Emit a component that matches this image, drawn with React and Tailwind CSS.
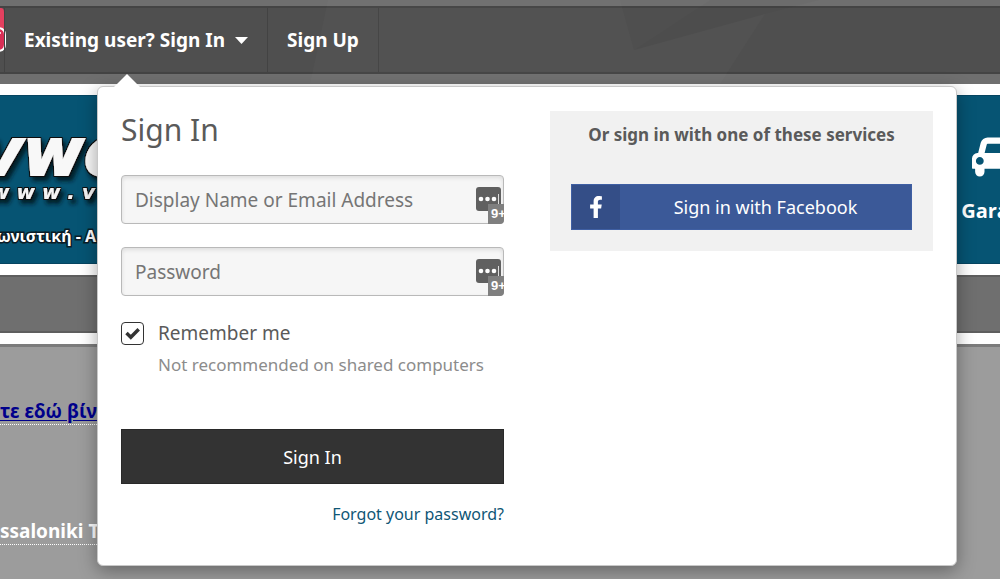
import { useState } from "react";
import { FaFacebookF } from "react-icons/fa";

function Facets() {

  return (

    <svg
      className="pointer-events-none absolute inset-0 h-full w-full"
      viewBox="0 0 1000 84"
      preserveAspectRatio="none"
      aria-hidden="true"
    >

      <polygon points="328,0 310,84 720,84 765,14 634,50 620,0" fill="#ffffff" opacity="0.02" />
      <polygon points="634,50 710,0 820,0 765,14" fill="#000000" opacity="0.02" />

    </svg>
  );
}

function InstagramIcon() {

  return (

    <svg className="h-16 w-1.5 shrink-0" viewBox="0 0 6 64" aria-hidden="true">

      <path d="M0 0H1Q4 0 4 4V42H0Z" fill="#e4405f" />
      <path d="M-14 20H-2Q5 20 5 27V36Q5 43-2 43H-14Z" fill="#d92e55" stroke="#ffffff" strokeWidth="2" />
      <circle cx="0" cy="25" r="1" fill="#ffffff" />

    </svg>
  );
}

function Logo() {

  return (

    <svg className="h-[167px] w-[110px] shrink-0" viewBox="0 0 110 167" aria-label="Club logo">

      <defs>
        <filter id="shade" x="-20%" y="-20%" width="140%" height="150%">
          <feMorphology in="SourceAlpha" operator="dilate" radius="1" result="edge" />
          <feFlood floodColor="#111111" />
          <feComposite in2="edge" operator="in" result="outline" />
          <feMerge result="lettering">
            <feMergeNode in="outline" />
            <feMergeNode in="SourceGraphic" />
          </feMerge>
          <feDropShadow in="lettering" dx="3" dy="4" stdDeviation="2" floodColor="#00141e" floodOpacity="0.9" />
        </filter>
      </defs>

      <text
        x="-20"
        y="79"
        fill="#f8f8f8"
        stroke="#f8f8f8"
        strokeWidth="2"
        fontFamily="DejaVu Sans, sans-serif"
        fontWeight="700"
        fontStyle="italic"
        fontSize="66"
        filter="url(#shade)"
      >
        vwc
      </text>

      <text
        x="-9"
        y="103"
        fill="#f4f4f4"
        fontFamily="DejaVu Sans, sans-serif"
        fontWeight="700"
        fontStyle="italic"
        fontSize="20"
        filter="url(#shade)"
      >
        w w w . v
      </text>

      <text
        x="-3"
        y="146"
        fill="#ffffff"
        stroke="#0a1c26"
        strokeWidth="3"
        paintOrder="stroke"
        fontFamily="Noto Sans, sans-serif"
        fontWeight="700"
        fontSize="16"
      >
        ωνιστική - Α
      </text>

    </svg>
  );
}

function CarIcon() {

  return (

    <svg className="h-10 w-[50px]" viewBox="0 0 2048 1600" fill="currentColor" aria-hidden="true">

      <path d="M480 960q0-66-47-113t-113-47-113 47-47 113 47 113 113 47 113-47 47-113zm36-320h1016l-89-357q-2-8-14-17.500t-21-9.500h-768q-9 0-21 9.500t-14 17.500zm1372 320q0-66-47-113t-113-47-113 47-47 113 47 113 113 47 113-47 47-113zm160-96v384q0 14-9 23t-23 9h-96v128q0 80-56 136t-136 56-136-56-56-136v-128h-1024v128q0 80-56 136t-136 56-136-56-56-136v-128h-96q-14 0-23-9t-9-23v-384q0-93 65.500-158.500t158.500-65.500h28l105-419q23-94 104-157.500t179-63.500h768q98 0 179 63.500t104 157.500l105 419h28q93 0 158.500 65.500t65.500 158.500z" />

    </svg>
  );
}

function Field({ type, label }) {

  return (

    <div className="relative">

      <input
        type={type}
        placeholder={label}
        aria-label={label}
        className="block h-[49px] w-full rounded border border-[#b9b9b9] bg-[#f6f6f6] pl-[13px] pr-9 text-[19px] text-[#5a5a5a] shadow-[inset_0_2px_4px_rgba(0,0,0,0.1)] placeholder:text-[#757575]"
      />

      {/* PASSWORD MANAGER BADGE */}

      <div className="absolute right-0 bottom-0 h-[37px] w-7 overflow-hidden rounded-br">

        <svg className="h-6 w-[25px]" viewBox="0 0 25 24" aria-hidden="true">

          <rect width="25" height="24" rx="3" fill="#606060" />
          <circle cx="5" cy="12" r="2.300" fill="#ffffff" />
          <circle cx="11.500" cy="12" r="2.300" fill="#ffffff" />
          <circle cx="18" cy="12" r="2.300" fill="#ffffff" />
          <rect x="22" y="7" width="1" height="10" fill="#dddddd" />

        </svg>

        <span className="absolute right-0 bottom-0 h-5 w-4 bg-[#7f7f7f] pl-[3px] font-['Liberation_Sans',sans-serif] text-[13px] leading-5 font-bold text-white">
          9+
        </span>

      </div>

    </div>
  );
}

function SignInMenu() {

  const [remember, setRemember] = useState(true);

  return (

    <div className="absolute top-[86px] right-[43px] left-[97px] rounded-md border border-[#c8c8c8] bg-white shadow-[0_5px_18px_rgba(0,0,0,0.35)]">

      <svg className="absolute -top-[13px] left-[15px] h-[14px] w-7" viewBox="0 0 28 14" aria-hidden="true">
        <path d="M0 14L14 0L28 14Z" fill="#ffffff" />
      </svg>

      <div className="grid grid-cols-2 items-start gap-[46px] px-[23px] pt-6 pb-[39px]">

        {/* ACCOUNT FORM */}

        <form onSubmit={(e) => e.preventDefault()}>

          <h2 className="text-[30px] leading-[38px] text-[#5a5a5a]">
            Sign In
          </h2>

          <div className="mt-[26px] flex flex-col gap-[23px]">
            <Field type="text" label="Display Name or Email Address" />
            <Field type="password" label="Password" />
          </div>

          <label className="mt-[23px] flex items-center gap-[14px] text-[19px] leading-7 text-[#5a5a5a]">

            <span className="relative h-[23px] w-[23px]">

              <input
                type="checkbox"
                checked={remember}
                onChange={(e) => setRemember(e.target.checked)}
                className="block h-full w-full appearance-none rounded border border-[#333333] bg-white"
              />

              {remember && (
                <svg
                  className="pointer-events-none absolute inset-1 h-[15px] w-[15px] text-[#333333]"
                  viewBox="0 0 15 15"
                  fill="none"
                  stroke="currentColor"
                  strokeWidth="3.500"
                  aria-hidden="true"
                >
                  <path d="M1.500 7L5.800 11.200L13.700 3.300" />
                </svg>
              )}

            </span>

            Remember me

          </label>

          <p className="mt-1 ml-[37px] text-[17px] leading-7 whitespace-nowrap text-[#8c8c8c]">
            Not recommended on shared computers
          </p>

          <button
            type="submit"
            className="mt-[50px] block h-[55px] w-full border border-[#292929] bg-[#333333] text-lg text-white"
          >
            Sign In
          </button>

          <p className="mt-[18px] text-right leading-6">
            <a href="#forgot" className="text-[#0f5675]">
              Forgot your password?
            </a>
          </p>

        </form>

        {/* OTHER SERVICES */}

        <div className="bg-[#f1f1f1] px-[21px] pt-3 pb-[21px]">

          <h3 className="text-center text-[17px] leading-6 font-bold whitespace-nowrap text-[#5a5a5a]">
            Or sign in with one of these services
          </h3>

          <button
            type="button"
            className="mt-[37px] flex h-[46px] w-full items-stretch border border-[#3f5fa3] bg-[#3b5998] text-lg text-white"
          >

            <span className="flex w-12 items-center justify-center bg-[#344e87]">
              <FaFacebookF className="h-[22px] w-[22px]" />
            </span>

            <span className="flex flex-1 items-center justify-center">
              Sign in with Facebook
            </span>

          </button>

        </div>

      </div>

    </div>
  );
}

export default function App() {

  return (

    <div className="relative min-h-screen overflow-hidden bg-[#9c9c9c] font-['Noto_Sans',sans-serif] text-base">

      {/* TOP BAR */}

      <header className="relative bg-[#6f6f6f] pt-1.5 pb-2.5">

        <nav className="flex h-[68px] items-stretch border-y-2 border-[#444444] bg-[#4f4f4f] text-[19px] font-bold text-white">

          <InstagramIcon />

          <button type="button" className="-ml-0.5 flex items-center gap-2.5 border-x border-[#434343] px-[19px]">

            Existing user? Sign In

            <svg className="h-[7px] w-[13px]" viewBox="0 0 13 7" fill="currentColor" aria-hidden="true">
              <path d="M0 0H13L6.500 7Z" />
            </svg>

          </button>

          <a href="#signup" className="flex items-center border-r border-[#434343] px-[19px]">
            Sign Up
          </a>

        </nav>

        <Facets />

      </header>

      {/* BANNER */}

      <div className="bg-white py-[11px]">

        <div className="flex items-center justify-between overflow-hidden border-y border-[#064561] bg-[#065473]">

          <Logo />

          <a
            href="#garage"
            className="-mr-8 flex flex-col items-center gap-[22px] font-['Open_Sans',sans-serif] text-xl leading-6 font-bold text-white"
          >
            <CarIcon />
            Garage
          </a>

        </div>

      </div>

      <div className="h-[58px] border-y-2 border-[#5e5e5e] bg-[#6f6f6f]" />

      <div className="h-[11px] bg-white" />

      {/* PAGE BODY */}

      <main className="border-t-[3px] border-[#7b7b7b] pt-[52px] text-[19px] leading-6 font-bold whitespace-nowrap">

        <p>
          <a href="#video" className="border-b border-dotted border-white text-[#00008b] underline underline-offset-2">
            τε εδώ βίντ
          </a>
        </p>

        <p className="mt-24">
          <a href="#thessaloniki" className="border-b border-dotted border-white text-white">
            ssaloniki T
          </a>
        </p>

      </main>

      <SignInMenu />

    </div>
  );
}
